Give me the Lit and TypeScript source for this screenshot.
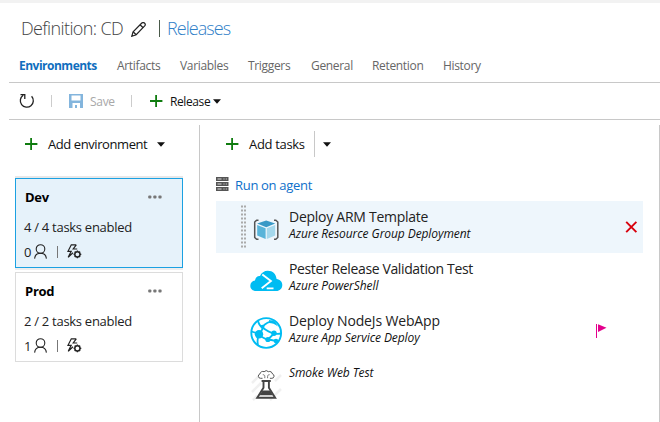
import { LitElement, html, css, svg, nothing } from 'lit';

const plus = html`<svg class="plus" width="13" height="12" viewBox="0 0 13 12"><path d="M6.1 0v12M0 6h12.4" stroke="#107c10" stroke-width="1.8"/></svg>`;
const caret = html`<svg class="caret" width="8" height="5" viewBox="0 0 8 5"><path d="M0 .3h8L4 4.800z" fill="#111"/></svg>`;
const dots = html`<svg class="dots" width="14" height="4" viewBox="0 0 14 4"><g fill="#777"><rect x=".2" y=".5" width="3.2" height="3" rx="1"/><rect x="5.3" y=".5" width="3.2" height="3" rx="1"/><rect x="10.400" y=".5" width="3.2" height="3" rx="1"/></g></svg>`;
const person = html`<svg class="person" width="13" height="15" viewBox="0 0 13 15"><g fill="none" stroke="#222" stroke-width="1.1"><circle cx="6.500" cy="5" r="4.300"/><path d="M.6 14.600C.9 11.300 3 9.300 6.500 9.300s5.600 2 5.900 5.300"/></g></svg>`;
const boltGear = html`<svg class="bolt" width="15" height="15" viewBox="0 0 15 15"><g fill="none" stroke="#222"><path d="M9.300 .8H4.300L1 7.300h3.200L1.200 13.200 6 8.700M9.300 .8L6.200 5h4" stroke-width="1.200"/><circle cx="10.400" cy="10.300" r="2.600" stroke-width="1.500"/><path d="M10.400 6.500v1M10.400 13v1.200M6.600 10.300h1M13.100 10.300h1.200M7.700 7.600l.8.8M12.300 12.200l.8.8M13.100 7.600l-.8.8M8.500 12.200l-.8.8" stroke-width="1.300"/></g></svg>`;

const icons = {
  arm: svg`<g fill="none" stroke="#555" stroke-width="1.500"><path d="M8.500 7.200H6.700L4.700 9v15.500l2 1.800h1.800M24 7.200h1.800L27.800 9v15.500l-2 1.800H24"/></g><path d="M16.200 7.400l9 3.200-9 3.600-9-3.600z" fill="#3999c6"/><path d="M7.200 12l8.400 3.200v10.900l-8.400-3.600z" fill="#59b4d9"/><path d="M25.200 12l-8.400 3.200v10.900l8.400-3.600z" fill="#a5d8ec"/>`,
  shell: svg`<path d="M6.300 26C2.900 26 .3 24 .3 20.700c0-3 2-5 4.700-5.300.3-2.900 2.300-4.700 5-4.500C11.300 7.700 14.300 5.700 17.800 5.700c5 0 8.400 3.500 8.800 8.400 3.500.5 5.700 2.800 5.700 5.900 0 3.500-2.600 6-6 6z" fill="#00bcf2"/><path d="M12.300 9.600l8.600 6.500-9.200 7.200M16.700 23.400h6.800" fill="none" stroke="#fff" stroke-width="1.900"/>`,
  web: svg`<circle cx="16.200" cy="16" r="14.900" fill="#fff" stroke="#00bcf2" stroke-width="1.900"/><g fill="none" stroke="#00bcf2" stroke-width="1.800"><path d="M8 3.500C8.500 7 10 9 12.500 10.500 17 14 20 15.500 24 16.300c3 .8 5 .7 7 0M12.500 9.700C15 7 18.500 4.700 23.500 4.200M9 17C12 14 13 12 12.500 9.700M9 17c3 3.500 5.500 5 9 5.500s6 1.200 8 1.700M9 17c-1.500 4-2 7-1 11M18 22.500l6-6M1.500 14.500L6 16"/></g><g fill="#00bcf2"><circle cx="9" cy="17.300" r="4.200"/><circle cx="12.500" cy="9.700" r="2"/><circle cx="24" cy="16.300" r="2.700"/><circle cx="17.900" cy="22.500" r="2.600"/><circle cx="26" cy="24" r="2.300"/><path d="M19 3l6 1.500 3 5c-3-2.500-6-3.500-9-3.500z"/></g>`,
  flask: svg`<g stroke="#f0f0f0" stroke-width="2.500"><path d="M2 14L13 3M2 23L11 14M20 31L31 20M25 12l6-6M3 31l4-4"/></g><path d="M12.500 9.300H10.500a2.200 2.200 0 0 1-.6-4.300 3 3 0 0 1 4.200-2.300 3 3 0 0 1 4.300 0A3 3 0 0 1 22.500 5a2.200 2.200 0 0 1-.6 4.300h-2" fill="#fff" stroke="#555" stroke-width="1"/><path d="M12.800 5.700c1.400 0 2 .6 2 1.700v1.800M19.600 5.700c-1.400 0-2 .6-2 1.700v1.800" fill="none" stroke="#666" stroke-width=".9"/><path d="M11.600 12h9.200M13.500 12v6.700L7.200 28.700h18L18.900 18.700V12" fill="#fff" stroke="#444" stroke-width="1.900"/><path d="M12.600 21.500h7.400l3 4.800H9.500z" fill="#444"/>`,
};

interface Task { cls: string; name?: string; kind: string; icon: keyof typeof icons; selected?: boolean; flagged?: boolean; }

const tasks: Task[] = [
  { cls: 'arm', name: 'Deploy ARM Template', kind: 'Azure Resource Group Deployment', icon: 'arm', selected: true },
  { cls: 'pester', name: 'Pester Release Validation Test', kind: 'Azure PowerShell', icon: 'shell' },
  { cls: 'node', name: 'Deploy NodeJs WebApp', kind: 'Azure App Service Deploy', icon: 'web', flagged: true },
  { cls: 'smoke', kind: 'Smoke Web Test', icon: 'flask' },
];
const tabs = ['Environments', 'Artifacts', 'Variables', 'Triggers', 'General', 'Retention', 'History'];
const environments = [
  { name: 'Dev', enabled: '4 / 4 tasks enabled', approvers: 0, active: true },
  { name: 'Prod', enabled: '2 / 2 tasks enabled', approvers: 1, active: false },
];

class AppRoot extends LitElement {
  static styles = css`
    :host { display: block; width: 660px; height: 422px; overflow: hidden; background: #fff; color: #222; font: 12px/20px "Open Sans", sans-serif; white-space: nowrap; }
    * { box-sizing: border-box; }
    svg { display: block; flex: none; }
    .page { display: flex; flex-direction: column; height: 422px; border-top: 3px solid #f2f2f2; }
    .title { display: flex; align-items: center; height: 24px; margin: 13px 0 0 21px; color: #444; font-size: 18px; font-weight: 300; line-height: 24px; }
    .title .name { width: 103px; letter-spacing: -.63px; }
    .title .pencil { margin: 2px 0 0 7px; }
    .title .sep { width: 1px; height: 17px; margin: 0 7px 0 13px; background: #4a5a4a; }
    .title .link { color: #2f80c8; letter-spacing: -.95px; }
    .tabs { display: grid; grid-template-columns: 98px 63px 68px 63px 61px 71px 50px; height: 26px; margin: 16px 0 0 19px; color: #666; letter-spacing: -.33px; }
    .tabs .on { color: #106ebe; font-weight: 700; letter-spacing: -.5px; }
    .toolbar { display: flex; align-items: center; height: 38px; margin-left: 9px; border: solid #c8c8c8; border-width: 1px 0; color: #111; }
    .refresh { margin-left: 10px; }
    .bar { width: 1px; height: 12px; background: #ccc; }
    .toolbar .bar1 { margin: 0 17px 0 16px; }
    .toolbar .save { width: 41px; margin: 1px 0 0 7px; color: #a8a8a8; letter-spacing: -.3px; }
    .toolbar .plus { margin: 0 7px 0 18px; }
    .toolbar .release { width: 43px; margin-top: 1px; letter-spacing: -.4px; }
    .body { display: flex; flex: 1; margin: 5px 0 0 9px; border-right: 1px solid #c8c8c8; }
    .left { width: 191px; border-right: 1px solid #c8c8c8; padding-left: 6px; }
    .add { display: flex; align-items: center; height: 20px; margin-top: 9px; font-size: 13px; color: #111; }
    .left .add { padding-left: 10px; }
    .left .add .txt { width: 109px; margin-left: 10px; letter-spacing: -.42px; }
    .card { width: 168px; height: 90px; margin-top: 4px; padding: 8px 8px 0; border: 1px solid #dcdcdc; font-size: 13px; }
    .card.on { margin-top: 24px; background: #e6f2fa; border-color: #1ba1e2; box-shadow: 0 -2px 0 #e8e8e8, 0 2px 0 #eee; }
    .head { display: flex; justify-content: space-between; padding: 0 12px 0 1px; color: #000; font-weight: 700; letter-spacing: -.25px; }
    .head .dots { margin-top: 8px; }
    .enabled { margin-top: 10px; letter-spacing: -.28px; }
    .meta { display: flex; align-items: center; margin-top: 5px; }
    .meta .n { width: 10px; }
    .meta .person { margin-top: -2px; }
    .meta .bolt { margin-top: -1px; }
    .meta .bar { margin: 0 9px 0 10px; background: #777; }
    .right { flex: 1; padding-left: 16px; }
    .right .add { padding-left: 10px; }
    .right .add .txt { width: 65px; margin-left: 10px; letter-spacing: -.33px; }
    .right .add .split { width: 1px; height: 26px; margin-right: 8px; background: #c8c8c8; }
    .agent { display: flex; align-items: center; height: 20px; margin: 21px 0 6px; font-size: 13px; color: #0e6fca; letter-spacing: -.31px; }
    .agent svg { margin: -3px 6px 0 0; }
    .task { display: flex; width: 427px; height: 52px; }
    .task.on { background: #eef6fc; }
    .grip { width: 5px; height: 44px; margin: 4px 0 0 25px; }
    .ico { margin: 12px 6px 0 4px; }
    .text { width: 307px; padding-top: 7px; color: #222; }
    .text .name { font-size: 14px; line-height: 18px; }
    .kind { font-style: italic; font-size: 12px; line-height: 16px; letter-spacing: -.08px; color: #111; }
    .smoke .kind { line-height: 17px; }
    .arm .name { letter-spacing: -.27px; }
    .pester .name { letter-spacing: -.37px; }
    .node .name { letter-spacing: -.16px; }
    .cross { margin: 20px 0 0 29px; }
    .flag { margin: 19px 0 0; }
  `;

  render() {
    return html`<div class="page">
      <div class="title"><span class="name">Definition: CD</span>
        <svg class="pencil" width="15" height="15" viewBox="0 0 15 15"><g fill="none" stroke="#222" stroke-width="1.200"><path d="M.8 14.200l1.300-4.400L10.800 1c1-.8 2.400-.4 3 .4.6.8.6 1.800-.1 2.500L5.200 12.700z"/><path d="M2.100 9.800l3.100 2.900M9 2.800l3.200 3"/></g></svg>
        <span class="sep"></span><span class="link">Releases</span></div>
      <div class="tabs">${tabs.map((t, i) => html`<span class=${i ? '' : 'on'}>${t}</span>`)}</div>
      <div class="toolbar">
        <svg class="refresh" width="16" height="16" viewBox="0 0 16 16"><g fill="none" stroke="#222" stroke-width="1.300"><path d="M4.200 2.300A6.500 6.500 0 1 0 12.600 3.300M1.500 1.700h4.300v4.400"/></g></svg>
        <span class="bar bar1"></span>
        <svg width="14" height="14" viewBox="0 0 14 14"><path d="M0 0h14v14H0z" fill="#83b5dd"/><path d="M2.500 1.500h9v5h-9z" fill="#fff"/><path d="M3.500 9h7.500v5H8v-3H6v3H3.500z" fill="#fff"/><path d="M6 11.500h2V14H6z" fill="#83b5dd"/></svg>
        <span class="save">Save</span><span class="bar"></span>${plus}<span class="release">Release</span>${caret}
      </div>
      <div class="body">
        <div class="left">
          <div class="add">${plus}<span class="txt">Add environment</span>${caret}</div>
          ${environments.map(e => html`<div class="card ${e.active ? 'on' : ''}">
            <div class="head"><span>${e.name}</span>${dots}</div>
            <div class="enabled">${e.enabled}</div>
            <div class="meta"><span class="n">${e.approvers}</span>${person}<span class="bar"></span>${boltGear}</div>
          </div>`)}
        </div>
        <div class="right">
          <div class="add">${plus}<span class="txt">Add tasks</span><span class="split"></span>${caret}</div>
          <div class="agent"><svg width="13" height="14" viewBox="0 0 13 14"><path d="M0 0h12.500v4H0zM0 5h12.500v4H0zM0 10h12.500v4H0z" fill="#555"/><path d="M1.500 2h4M1.500 7h4M1.500 12h4M7.500 2h1M9.800 2h1M7.500 7h1M9.800 7h1M7.500 12h1M9.800 12h1" stroke="#ddd" stroke-width="1"/></svg>Run on agent</div>
          ${tasks.map(t => html`<div class="task ${t.cls} ${t.selected ? 'on' : ''}">
            <svg class="grip" viewBox="0 0 5 44">${t.selected ? Array.from({ length: 11 }, (_, i) => svg`<path d="M0 ${i * 4 + 1.5}h2M3 ${i * 4 + 1.5}h2" stroke="#aaa" stroke-width="2"/>`) : nothing}</svg>
            <svg class="ico" width="33" height="33" viewBox="0 0 33 33">${icons[t.icon]}</svg>
            <div class="text">${t.name ? html`<div class="name">${t.name}</div>` : nothing}<div class="kind">${t.kind}</div></div>
            ${t.flagged ? html`<svg class="flag" width="11" height="14" viewBox="0 0 11 14"><path d="M0 0h1v14H0zM2 .3l8.500 3.500L2 8z" fill="#e3008c"/></svg>` : nothing}
            ${t.selected ? html`<svg class="cross" width="13" height="12" viewBox="0 0 13 12"><path d="M1.200 .9l10.200 10.300M11.400 .9L1.200 11.200" stroke="#d8000c" stroke-width="1.900"/></svg>` : nothing}
          </div>`)}
        </div>
      </div>
    </div>`;
  }
}
customElements.define('app-root', AppRoot);
